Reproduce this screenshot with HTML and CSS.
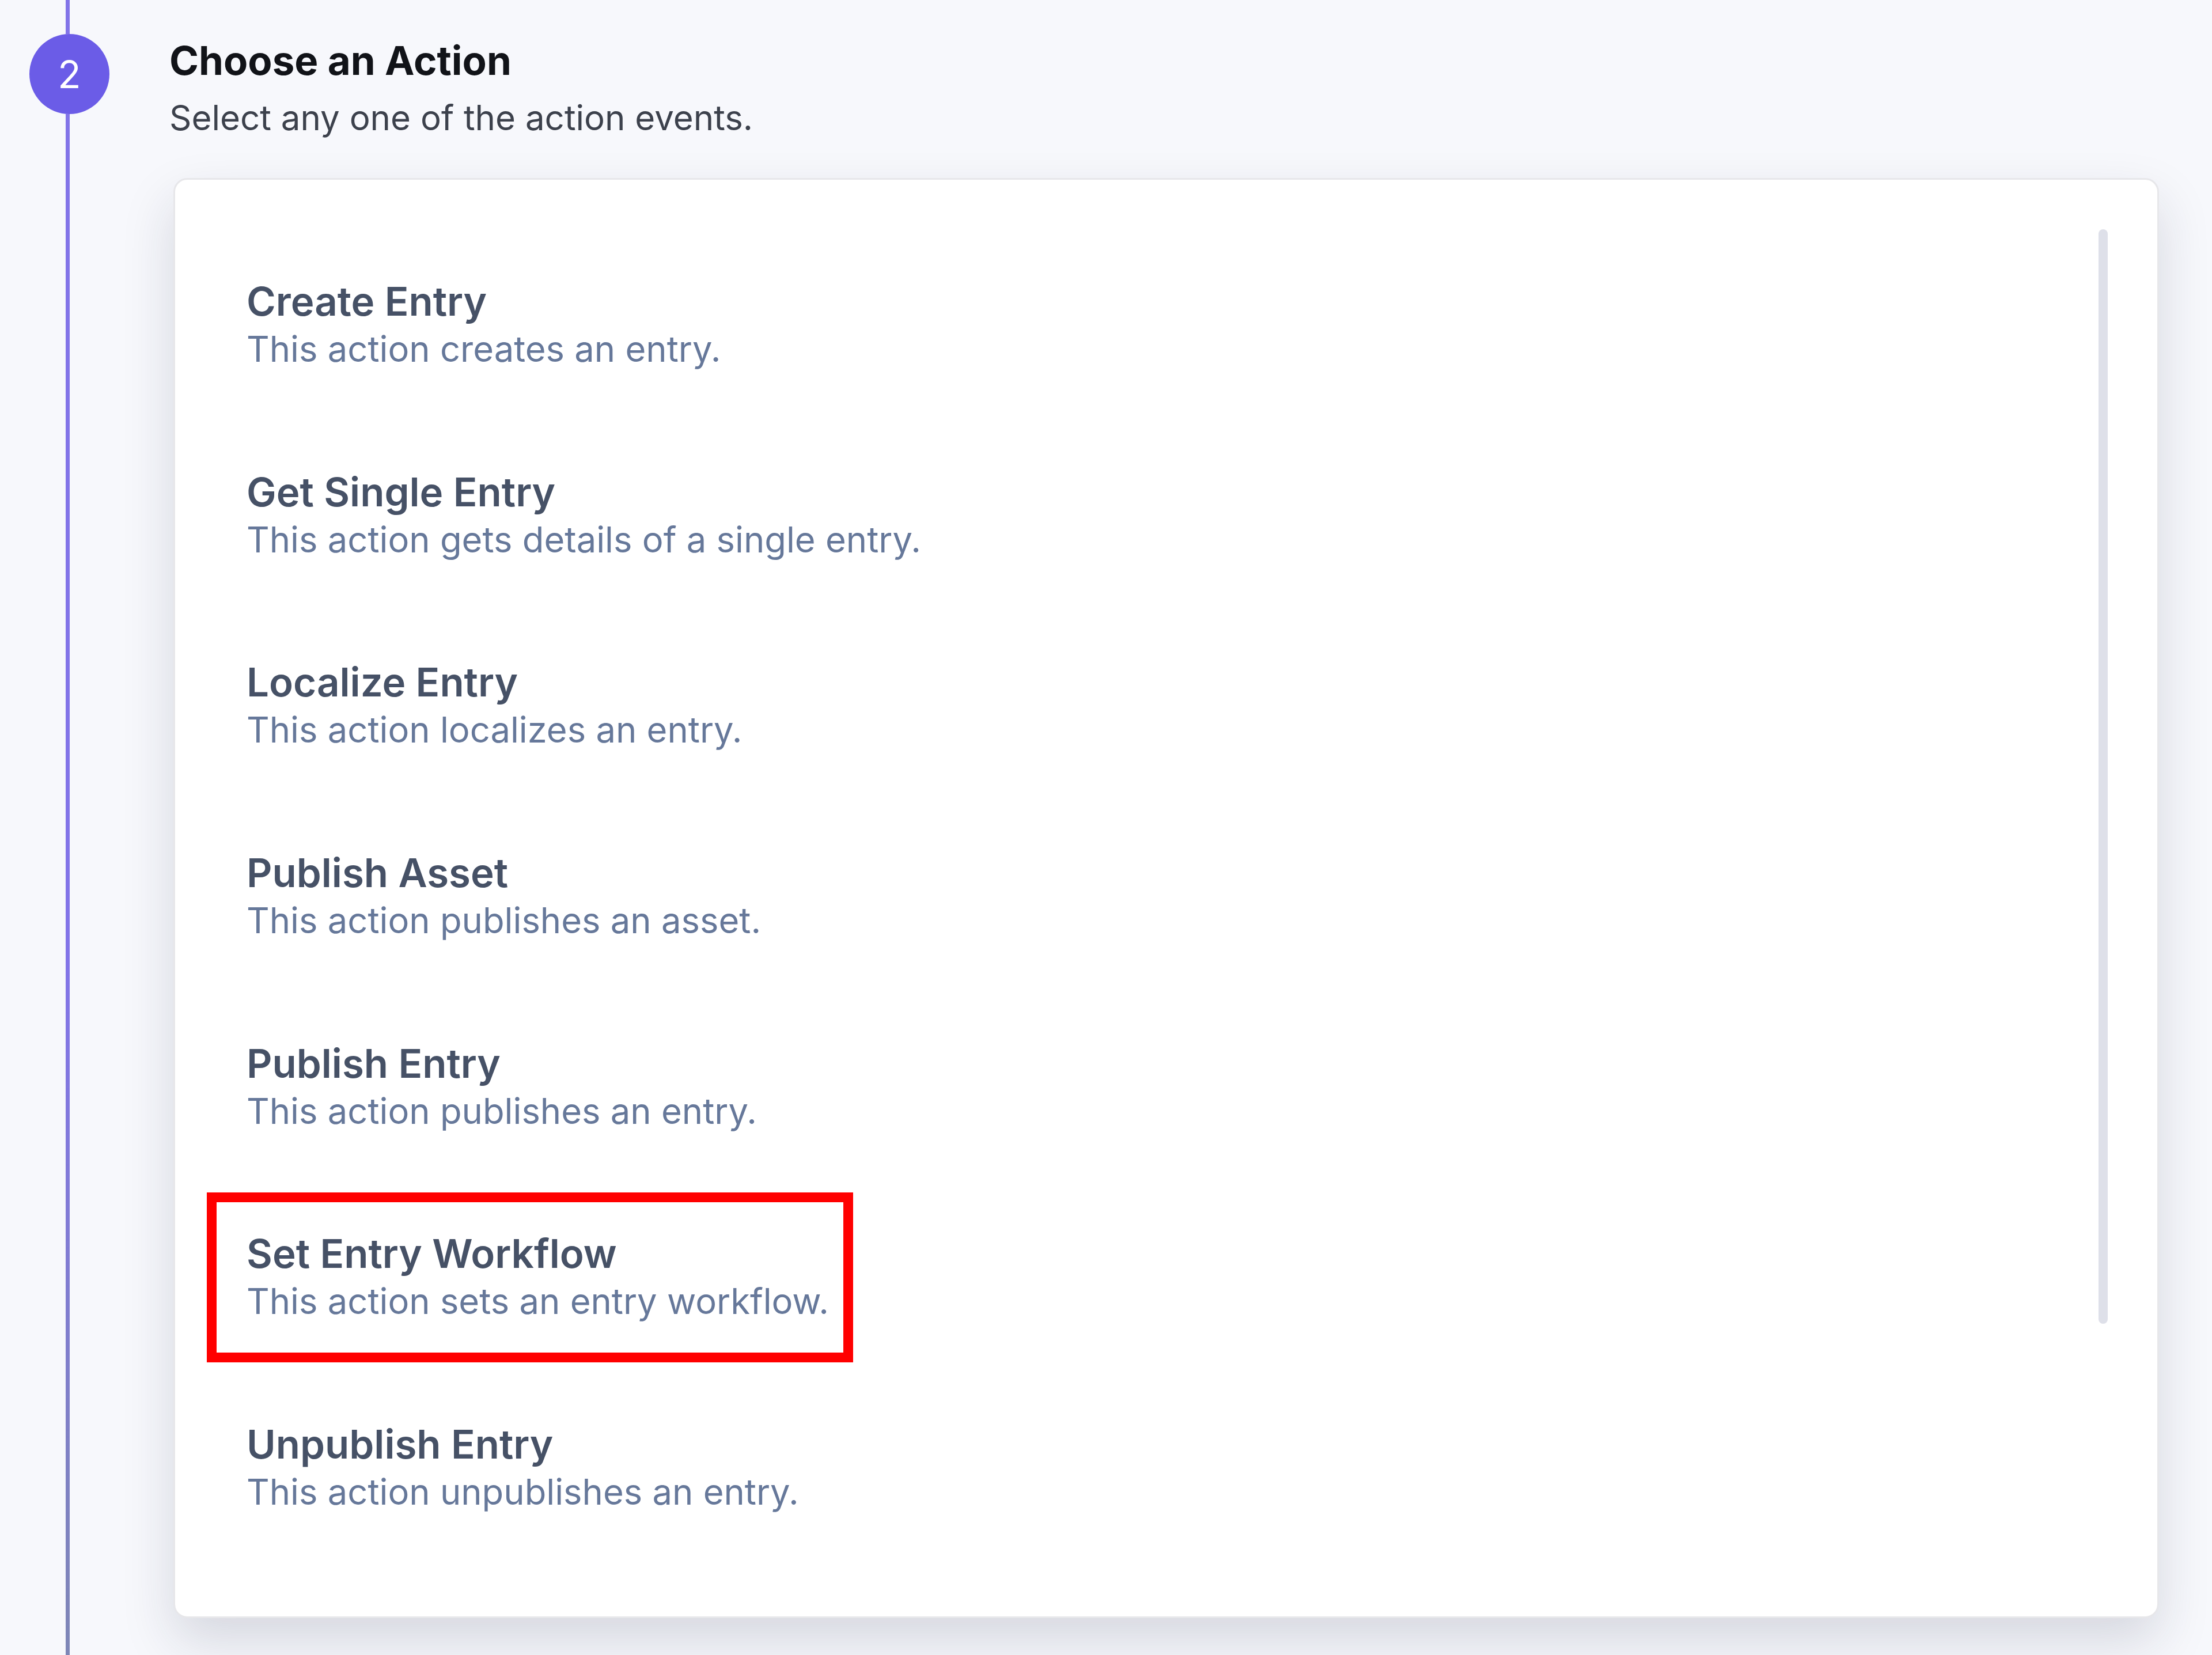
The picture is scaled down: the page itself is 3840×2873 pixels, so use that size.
FILE: index.html
```html
<!DOCTYPE html>
<html lang="en">
<head>
<meta charset="utf-8">
<title>Choose an Action</title>
<link rel="stylesheet" href="styles.css">
</head>
<body>
<div class="step">
  <div class="rail">
    <div class="rail-line rail-top"></div>
    <div class="badge">2</div>
    <div class="rail-line rail-bottom"></div>
  </div>
  <div class="content">
    <h2 class="heading">Choose an Action</h2>
    <p class="subheading">Select any one of the action events.</p>
    <div class="card">
      <ul class="list">
        <li class="item"><div class="title">Create Entry</div><div class="desc">This action creates an entry.</div></li>
        <li class="item"><div class="title">Get Single Entry</div><div class="desc">This action gets details of a single entry.</div></li>
        <li class="item"><div class="title">Localize Entry</div><div class="desc">This action localizes an entry.</div></li>
        <li class="item"><div class="title">Publish Asset</div><div class="desc">This action publishes an asset.</div></li>
        <li class="item"><div class="title">Publish Entry</div><div class="desc">This action publishes an entry.</div></li>
        <li class="item item-marked"><div class="title">Set Entry Workflow</div><div class="desc">This action sets an entry workflow.</div><span class="mark"></span></li>
        <li class="item"><div class="title">Unpublish Entry</div><div class="desc">This action unpublishes an entry.</div></li>
      </ul>
      <div class="scrollbar"><div class="thumb"></div></div>
    </div>
  </div>
</div>
</body>
</html>
```

FILE: styles.css
```css
html, body {
  margin: 0;
  padding: 0;
  height: 100%;
}
body {
  background: #f7f8fc;
  font-family: Inter, "Noto Sans", "Liberation Sans", sans-serif;
  overflow: hidden;
}
.step {
  display: flex;
  min-height: 2873px;
  padding-left: 51px;
  box-sizing: border-box;
}
.rail {
  width: 139px;
  flex: 0 0 139px;
  display: flex;
  flex-direction: column;
  align-items: center;
}
.rail-line {
  width: 7px;
  margin-left: -6px;
}
.rail-top {
  height: 59px;
  background: #8274e8;
}
.rail-bottom {
  flex: 1;
  background: linear-gradient(#8274e8 0%, #8274e8 55%, #7e86b6 100%);
}
.badge {
  width: 139px;
  height: 139px;
  border-radius: 50%;
  background: #6b5ce7;
  color: #ffffff;
  font-size: 66px;
  font-weight: 400;
  display: flex;
  align-items: center;
  justify-content: center;
  line-height: 1;
}
.content {
  margin-left: 104px;
  width: 3454px;
  padding-top: 64px;
}
.heading {
  margin: 0;
  font-size: 69px;
  line-height: 82px;
  font-weight: 700;
  color: #111318;
}
.subheading {
  margin: 18px 0 0;
  font-size: 60px;
  line-height: 81px;
  font-weight: 400;
  color: #3c414c;
}
.card {
  margin-top: 64px;
  margin-left: 7px;
  width: 3447px;
  height: 2500px;
  box-sizing: border-box;
  background: #ffffff;
  border: 3px solid #e7e7ea;
  border-radius: 24px;
  box-shadow: 0 40px 90px rgba(30, 35, 60, 0.15);
  display: flex;
  padding: 86px 86px 0 124px;
}
.list {
  list-style: none;
  margin: 0;
  padding: 0;
  flex: 1;
}
.item {
  position: relative;
  height: 330.7px;
  box-sizing: border-box;
  padding-top: 84px;
}
.title {
  font-size: 69px;
  line-height: 82px;
  font-weight: 600;
  color: #465166;
}
.desc {
  font-size: 61.5px;
  line-height: 84px;
  font-weight: 400;
  color: #66789a;
}
.mark {
  position: absolute;
  top: 19px;
  bottom: 17px;
  left: -69px;
  width: 1122px;
  box-sizing: border-box;
  border: 17px solid #ff0000;
}
.scrollbar {
  width: 16px;
  flex: 0 0 16px;
}
.thumb {
  height: 1900px;
  border-radius: 8px;
  background: #dee0e9;
}
```
